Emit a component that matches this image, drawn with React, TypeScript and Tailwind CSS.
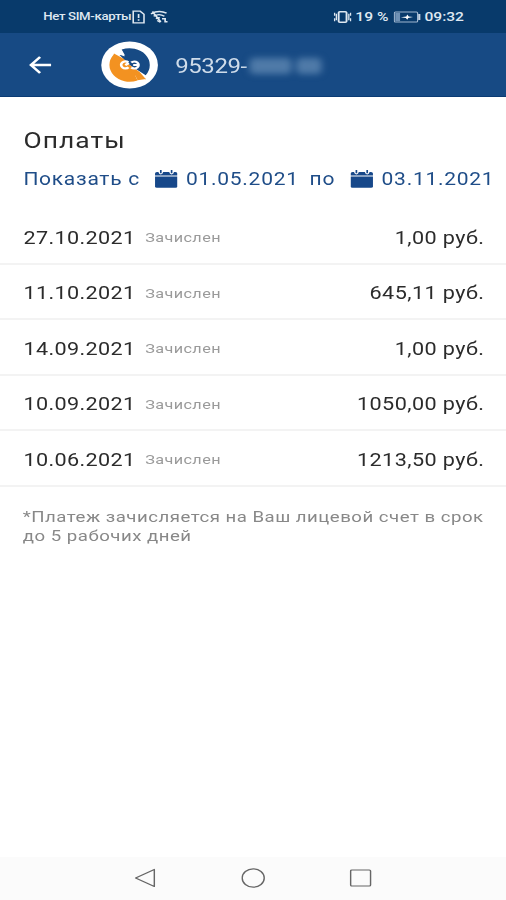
import React from 'react';

interface IPayment {
    date: string;
    amount: string;
}

const payments: IPayment[] = [
    { date: '27.10.2021', amount: '1,00' },
    { date: '11.10.2021', amount: '645,11' },
    { date: '14.09.2021', amount: '1,00' },
    { date: '10.09.2021', amount: '1050,00' },
    { date: '10.06.2021', amount: '1213,50' },
];

const SimIcon = () => (
    <svg className="w-[11px] h-3.5" viewBox="0 0 11 14" fill="none" stroke="currentColor" strokeWidth="1.3">
        <path d="M1 1.2h5.8L10 4.2v8.6H1z" />
        <path d="M5.5 4v4M5.5 9.2v1.6" strokeWidth="1.4" />
    </svg>
);

const WifiIcon = () => (
    <svg className="w-[15px] h-3.5" viewBox="0 0 15 14" fill="none" stroke="currentColor" strokeWidth="1.4">
        <path d="M.8 3.8Q7.5-.6 13.8 3.2M3 6.3Q7.5 3 12 6.3M5 8.8q1.6-1.4 3.2-.8M2 1.5l7 10.5" />
        <path d="M6 10.5l2.5 1.6M10 8.8h2.6v3h2" />
    </svg>
);

const VibrateIcon = () => (
    <svg className="w-[15px] h-3.5" viewBox="0 0 15 14" fill="none" stroke="currentColor" strokeWidth="1.6">
        <rect x="4.2" y="1.7" width="6.6" height="10.6" rx="1" />
        <path d="M2.3 3.8v6.4M.8 2.8v3M.8 8.2v3M12.7 3.8v6.4M14.2 2.8v3M14.2 8.2v3" strokeWidth="1.1" />
    </svg>
);

const BatteryIcon = () => (
    <svg className="w-[23px] h-3" viewBox="0 0 23 12">
        <rect x=".6" y="1" width="19.4" height="10" rx="1" fill="none" stroke="#9fb6cf" />
        <rect x="1.4" y="1.8" width="4" height="8.4" fill="#6f91b5" />
        <path d="M21.4 3v6" stroke="#c4d3e3" strokeWidth="1.8" />
        <path d="M6 6.3l4.6-.9.8-2 1.2 2 3.6.5-4 1-.8 1.8-1.2-1.8z" fill="#fff" />
    </svg>
);

const BackIcon = () => (
    <svg className="w-[19px] h-[18px]" viewBox="0 0 19 18" fill="none" stroke="#fff" strokeWidth="2.3">
        <path d="M18.6 9H1.8M9.4 1L1.8 9l7.6 8" />
    </svg>
);

const Logo = () => (
    <svg className="w-12 h-12" viewBox="0 0 48 48">
        <circle cx="24" cy="24" r="23.6" fill="#fff" />
        <path d="M17.4 8.6A16.8 16.8 0 0 1 37.4 34.2L24 24 15.6 14l4.6.6z" fill="#174a84" />
        <path d="M30.6 39.4A16.8 16.8 0 0 1 10.6 13.8L11 12.6 19 17.8 24 24 32.4 31 37.8 38.6 28.6 34.2z" fill="#f39221" />
        <path d="M10.4 10.6L19.8 15.4 17.4 9.4z" fill="#fff" />
        <path d="M37.6 38L28.2 33.2 30.6 39.2z" fill="#f39221" />
        <g fill="none" stroke="#fff" strokeWidth="2.2">
            <path d="M22.9 21.4a3.5 3.5 0 1 0 .2 4.8M23.4 22l-3 2.2" />
            <path d="M25.4 21.6a3.5 3.5 0 1 1 0 4.8M27 24h4" />
        </g>
    </svg>
);

const CalendarIcon = () => (
    <svg className="mb-px w-[19px] h-[18px] shrink-0" viewBox="0 0 19 18" fill="#17488a">
        <path d="M.2 6.4h18.6v9.8a1.6 1.6 0 0 1-1.6 1.6H1.8A1.6 1.6 0 0 1 .2 16.2z" />
        <path d="M.2 5.4V3.6Q.2 2 1.8 2H3q.4 2.4 2 2.4T7 2h5q.4 2.4 2 2.4T16 2h1.2q1.6 0 1.6 1.6v1.8z" />
        <path d="M4.3 0h1.4v3.2H4.3zM13.3 0h1.4v3.2h-1.4z" />
    </svg>
);

const StatusBar = () => (
    <div className="flex h-[33px] items-center bg-[#083a6b] pl-9 pr-[35px] text-[#dfe8f1]">
        <span className="w-[74px] pt-0.5 text-[11px] font-medium tracking-[-0.28px] whitespace-nowrap">Нет SIM-карты</span>
        <SimIcon />
        <span className="ml-1"><WifiIcon /></span>
        <div className="ml-auto flex items-center">
            <VibrateIcon />
            <span className="ml-[3px] text-[13px] font-medium whitespace-nowrap">19 %</span>
            <span className="ml-1"><BatteryIcon /></span>
            <span className="ml-[3px] text-[13px] font-medium">09:32</span>
        </div>
    </div>
);

const AppBar = () => (
    <header className="flex h-16 items-center border-b border-[#0b3b74] bg-[#174a84] pl-6">
        <BackIcon />
        <div className="ml-[41px]"><Logo /></div>
        <span className="ml-3.5 pt-0.5 text-[20px] tracking-[-0.35px] text-[#cfdcea]">95329-</span>
        <div className="ml-0.5 flex gap-1 pt-0.5 blur-[3px]">
            <div className="h-4 w-[35px] rounded bg-[#4f7aa8]" />
            <div className="h-4 w-[21px] rounded bg-[#4f7aa8]" />
        </div>
    </header>
);

const PeriodFilter = () => (
    <div className="flex h-6 items-center pl-[19.5px] text-[17.5px] tracking-[0.6px] whitespace-nowrap text-[#1f4d88]">
        <span className="w-[109.5px] pt-px">Показать с</span>
        <CalendarIcon />
        <span className="ml-[7px] w-[103px] pt-px">01.05.2021</span>
        <span className="w-[34px] pt-px">по</span>
        <CalendarIcon />
        <span className="ml-[7px] pt-px">03.11.2021</span>
    </div>
);

const PaymentRow = ({ date, amount }: IPayment) => (
    <li className="flex h-[55.5px] items-center border-b-2 border-[#f3f3f3] pl-[19.5px] pr-[18px] pt-[3px] text-[18px] text-[#2b2b2b]">
        <span className="w-[101.5px] tracking-[0.3px]">{date}</span>
        <span className="text-[13.5px] tracking-[0.35px] text-[#9a9a9a]">Зачислен</span>
        <span className="ml-auto tracking-[0.35px]">{amount} руб.</span>
    </li>
);

const NavBar = () => (
    <nav className="flex h-[43px] items-center bg-[#fbfbfb] pb-0.5 pl-28 text-[#666]">
        <svg className="w-[18px] h-5" viewBox="0 0 18 20" fill="none" stroke="currentColor" strokeWidth="1.2">
            <path d="M16.6 1.5v17L1 10z" strokeLinejoin="round" />
        </svg>
        <svg className="ml-[71px] w-5 h-5" viewBox="0 0 20 20" fill="none" stroke="currentColor" strokeWidth="1.2">
            <circle cx="10" cy="10" r="9.2" />
        </svg>
        <svg className="ml-[70px] w-5 h-5" viewBox="0 0 20 20" fill="none" stroke="currentColor" strokeWidth="1.2">
            <rect x="1.2" y="2" width="16.6" height="16" rx="1" />
        </svg>
    </nav>
);

const App = () => {
    return (
        <div className="h-[900px] w-[506px] overflow-hidden bg-white">
            {/* the whole screen is wider than its natural proportions */}
            <div className="flex h-[900px] w-[421.667px] origin-top-left scale-x-[1.2] flex-col font-[Roboto,sans-serif]">
                <StatusBar />
                <AppBar />
                <main className="flex-1 pt-[29px]">
                    <h1 className="pl-[19.5px] text-[22px] leading-[30px] tracking-[0.9px] text-[#2b2b2b]">Оплаты</h1>
                    <div className="mt-[11px]"><PeriodFilter /></div>
                    <ul className="mt-[18px]">
                        {payments.map((payment) => (
                            <PaymentRow key={payment.date} {...payment} />
                        ))}
                    </ul>
                    <p className="mt-[21px] pl-[19px] text-[15.5px] leading-[19px] tracking-[0.42px] whitespace-nowrap text-[#888]">
                        *Платеж зачисляется на Ваш лицевой счет в срок
                        <br />
                        до 5 рабочих дней
                    </p>
                </main>
                <NavBar />
            </div>
        </div>
    );
};

export default App;
